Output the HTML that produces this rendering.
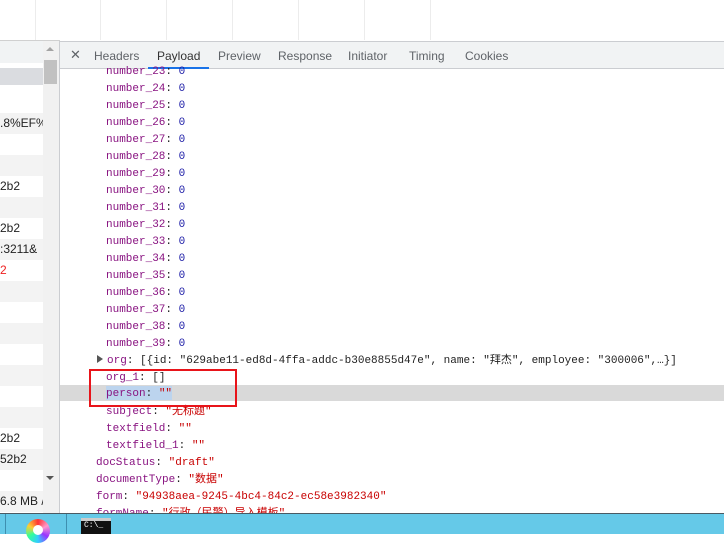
<!DOCTYPE html>
<html><head><meta charset="utf-8"><style>
*{margin:0;padding:0;box-sizing:border-box}
body{width:724px;height:534px;overflow:hidden;background:#fff;position:relative;font-family:"Liberation Sans",sans-serif}
.abs{position:absolute}
.vl{position:absolute;top:0;height:40px;width:1px;background:#ececec}
.tabs{left:60px;top:41px;width:664px;height:28px;background:#f1f3f4;border-top:1px solid #cbcdd1;border-bottom:1px solid #cbcdd1;font-size:12px;color:#5f6368}
.tabs span{position:absolute;top:7px}
.code{font-family:"Liberation Mono","Noto Sans CJK SC",monospace;font-size:11px;white-space:pre;line-height:17px;height:17px}
.k{color:#881280}.n{color:#1a1aa6}.s{color:#c80000}.p{color:#222}
.left{left:0;top:63px;width:43px;height:450px}
.row{position:absolute;left:0;width:43px;height:21px;font-size:12px;color:#222;line-height:21px;overflow:hidden;white-space:nowrap}
</style></head><body>
<div class="vl" style="left:35px"></div><div class="vl" style="left:100px"></div><div class="vl" style="left:166px"></div><div class="vl" style="left:232px"></div><div class="vl" style="left:298px"></div><div class="vl" style="left:364px"></div><div class="vl" style="left:430px"></div>
<div class="abs" style="left:0;top:40px;width:60px;height:474px;background:#fff;border-top:1px solid #d0d0d0"></div>
<div class="abs" style="left:0;top:41px;width:43px;height:22px;background:#f1f3f4"></div>
<div class="abs left">
<div class="row" style="top:5px;background:#dadce0;height:17px"></div>
<div class="row" style="top:50px;background:#f3f3f3">.8%EF%</div>
<div class="row" style="top:92px;background:#f3f3f3"></div>
<div class="row" style="top:113px"> 2b2</div>
<div class="row" style="top:134px;background:#f3f3f3"></div>
<div class="row" style="top:155px"> 2b2</div>
<div class="row" style="top:176px;background:#f3f3f3">:3211&amp;</div>
<div class="row" style="top:197px;color:#e22"> 2</div>
<div class="row" style="top:218px;background:#f3f3f3"></div>
<div class="row" style="top:260px;background:#f3f3f3"></div>
<div class="row" style="top:302px;background:#f3f3f3"></div>
<div class="row" style="top:344px;background:#f3f3f3"></div>
<div class="row" style="top:365px">2b2</div>
<div class="row" style="top:386px;background:#f3f3f3">52b2</div>
<div class="row" style="top:428px;background:#f3f3f3">6.8 MB / 1</div>
</div>
<div class="abs" style="left:43px;top:41px;width:16px;height:472px;background:#f1f1f1"></div>
<div class="abs" style="left:46px;top:47px;width:0;height:0;border-left:4px solid transparent;border-right:4px solid transparent;border-bottom:4px solid #a3a3a3"></div>
<div class="abs" style="left:44px;top:60px;width:13px;height:24px;background:#c1c1c1"></div>
<div class="abs" style="left:46px;top:476px;width:0;height:0;border-left:4px solid transparent;border-right:4px solid transparent;border-top:4px solid #555"></div>
<div class="abs" style="left:59px;top:41px;width:1px;height:472px;background:#cbcdd1"></div>
<div class="abs tabs">
<span style="left:10px;color:#5f6368;font-size:13px;top:5px">✕</span>
<span style="left:34px">Headers</span>
<span style="left:97px;color:#333">Payload</span>
<span style="left:158px">Preview</span>
<span style="left:218px">Response</span>
<span style="left:288px">Initiator</span>
<span style="left:349px">Timing</span>
<span style="left:405px">Cookies</span>
<div class="abs" style="left:88px;top:25px;width:61px;height:2px;background:#1a73e8"></div>
</div>
<div class="abs" style="left:60px;top:385px;width:664px;height:16px;background:#d9d9d9"></div>
<div class="abs" style="left:106px;top:386px;width:66px;height:14px;background:#bcd4ee"></div>
<div class="abs" style="left:60px;top:64px;width:664px">
<div class="code abs" style="left:46px;top:0"><span class="k">number_23</span><span class="p">: </span><span class="n">0</span></div>
<div class="code abs" style="left:46px;top:17px"><span class="k">number_24</span><span class="p">: </span><span class="n">0</span></div>
<div class="code abs" style="left:46px;top:34px"><span class="k">number_25</span><span class="p">: </span><span class="n">0</span></div>
<div class="code abs" style="left:46px;top:51px"><span class="k">number_26</span><span class="p">: </span><span class="n">0</span></div>
<div class="code abs" style="left:46px;top:68px"><span class="k">number_27</span><span class="p">: </span><span class="n">0</span></div>
<div class="code abs" style="left:46px;top:85px"><span class="k">number_28</span><span class="p">: </span><span class="n">0</span></div>
<div class="code abs" style="left:46px;top:102px"><span class="k">number_29</span><span class="p">: </span><span class="n">0</span></div>
<div class="code abs" style="left:46px;top:119px"><span class="k">number_30</span><span class="p">: </span><span class="n">0</span></div>
<div class="code abs" style="left:46px;top:136px"><span class="k">number_31</span><span class="p">: </span><span class="n">0</span></div>
<div class="code abs" style="left:46px;top:153px"><span class="k">number_32</span><span class="p">: </span><span class="n">0</span></div>
<div class="code abs" style="left:46px;top:170px"><span class="k">number_33</span><span class="p">: </span><span class="n">0</span></div>
<div class="code abs" style="left:46px;top:187px"><span class="k">number_34</span><span class="p">: </span><span class="n">0</span></div>
<div class="code abs" style="left:46px;top:204px"><span class="k">number_35</span><span class="p">: </span><span class="n">0</span></div>
<div class="code abs" style="left:46px;top:221px"><span class="k">number_36</span><span class="p">: </span><span class="n">0</span></div>
<div class="code abs" style="left:46px;top:238px"><span class="k">number_37</span><span class="p">: </span><span class="n">0</span></div>
<div class="code abs" style="left:46px;top:255px"><span class="k">number_38</span><span class="p">: </span><span class="n">0</span></div>
<div class="code abs" style="left:46px;top:272px"><span class="k">number_39</span><span class="p">: </span><span class="n">0</span></div>
<div class="abs" style="left:37px;top:291px;width:0;height:0;border-top:4px solid transparent;border-bottom:4px solid transparent;border-left:6px solid #555"></div>
<div class="code abs" style="left:47px;top:289px"><span class="k">org</span><span class="p">: [{id: "629abe11-ed8d-4ffa-addc-b30e8855d47e", name: "拜杰", employee: "300006",…}]</span></div>
<div class="code abs" style="left:46px;top:306px"><span class="k">org_1</span><span class="p">: []</span></div>
<div class="code abs" style="left:46px;top:322px"><span class="k">person</span><span class="p">: </span><span class="s">""</span></div>
<div class="code abs" style="left:46px;top:340px"><span class="k">subject</span><span class="p">: </span><span class="s">"无标题"</span></div>
<div class="code abs" style="left:46px;top:357px"><span class="k">textfield</span><span class="p">: </span><span class="s">""</span></div>
<div class="code abs" style="left:46px;top:374px"><span class="k">textfield_1</span><span class="p">: </span><span class="s">""</span></div>
<div class="code abs" style="left:36px;top:391px"><span class="k">docStatus</span><span class="p">: </span><span class="s">"draft"</span></div>
<div class="code abs" style="left:36px;top:408px"><span class="k">documentType</span><span class="p">: </span><span class="s">"数据"</span></div>
<div class="code abs" style="left:36px;top:425px"><span class="k">form</span><span class="p">: </span><span class="s">"94938aea-9245-4bc4-84c2-ec58e3982340"</span></div>
<div class="code abs" style="left:36px;top:442px"><span class="k">formName</span><span class="p">: </span><span class="s">"行政（民警）导入模板"</span></div>
</div>
<div class="abs" style="left:89px;top:369px;width:148px;height:38px;border:2px solid #e8141a"></div>
<div class="abs" style="left:0;top:513px;width:724px;height:21px;background:#65c9e8;border-top:1px solid #4a5a63"></div>
<div class="abs" style="left:5px;top:514px;width:1px;height:20px;background:#3e8fb0"></div>
<div class="abs" style="left:66px;top:514px;width:1px;height:20px;background:#3e8fb0"></div>
<div class="abs" style="left:26px;top:519px;width:24px;height:24px;border-radius:50%;background:conic-gradient(#f33,#f9c,#93f,#3cf,#3f9,#fc3,#f33)"></div>
<div class="abs" style="left:33px;top:525px;width:10px;height:10px;border-radius:50%;background:#fff"></div>
<div class="abs" style="left:81px;top:518px;width:30px;height:16px;background:#111;border-top:3px solid #ccc;color:#fff;font-family:'Liberation Mono',monospace;font-size:8px;padding-left:3px">C:\_</div>
</body></html>
